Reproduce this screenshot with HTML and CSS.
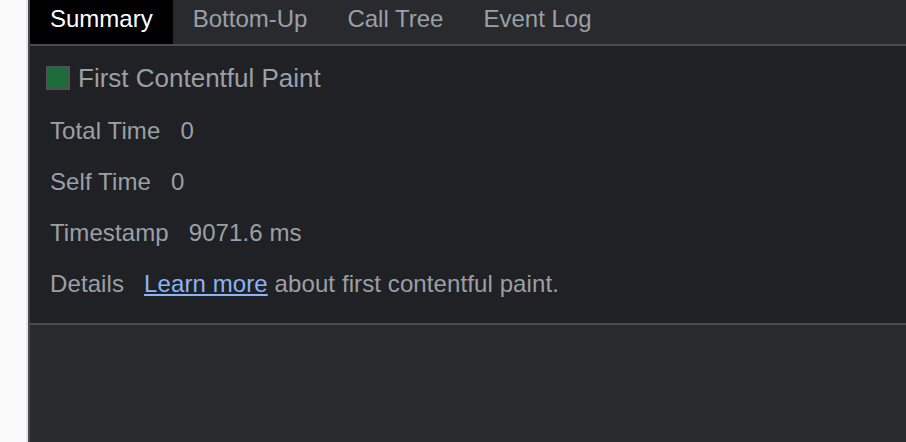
FILE: index.html
```html
<!DOCTYPE html>
<html>
<head>
<meta charset="utf-8">
<link rel="stylesheet" href="styles.css">
</head>
<body>
<div class="page">
  <div class="gutter"></div>
  <div class="panel">
    <div class="tabs">
      <div class="tab active">Summary</div>
      <div class="tab">Bottom-Up</div>
      <div class="tab">Call Tree</div>
      <div class="tab">Event Log</div>
    </div>
    <div class="summary">
      <div class="title"><span class="swatch"></span><span>First Contentful Paint</span></div>
      <div class="row"><span class="label">Total Time</span><span class="value">0</span></div>
      <div class="row"><span class="label">Self Time</span><span class="value">0</span></div>
      <div class="row"><span class="label">Timestamp</span><span class="value">9071.6 ms</span></div>
      <div class="row"><span class="label">Details</span><span class="value"><a class="link" href="#">Learn more</a> about first contentful paint.</span></div>
    </div>
    <div class="empty"></div>
  </div>
</div>
</body>
</html>
```

FILE: styles.css
```css
html, body {
  margin: 0;
  padding: 0;
  background: #fafafa;
  height: 100%;
  overflow: hidden;
}
.page {
  display: flex;
  height: 442px;
  font-family: "Liberation Sans", Arial, sans-serif;
}
.gutter {
  width: 26px;
  flex: none;
  background: #fafafa;
  border-right: 2px solid #e6e6e6;
}
.panel {
  flex: 1;
  display: flex;
  flex-direction: column;
  border-left: 2px solid #46484d;
  background: #292a2e;
  min-width: 0;
}
.tabs {
  display: flex;
  height: 44px;
  border-bottom: 2px solid #4a4c51;
  background: #292a2e;
}
.tab {
  padding: 0 20px;
  line-height: 38px;
  height: 44px;
  font-size: 24px;
  color: #9aa0a6;
  white-space: nowrap;
}
.tab.active {
  background: #000;
  color: #fff;
}
.summary {
  background: #202124;
  border-bottom: 2px solid #4a4c51;
  padding: 20px 0 14px 0;
  height: 243px;
}
.title {
  display: flex;
  align-items: center;
  height: 24px;
  padding-left: 16px;
  font-size: 26px;
  color: #9aa0a6;
  margin-bottom: 15px;
}
.swatch {
  width: 20px;
  height: 20px;
  border: 2px solid #4d5055;
  background: #1d6b38;
  margin-right: 8px;
  flex: none;
}
.row {
  height: 51px;
  line-height: 51px;
  padding-left: 20px;
  font-size: 24px;
  color: #9aa0a6;
  white-space: nowrap;
  letter-spacing: 0.1px;
}
.label {
  margin-right: 20px;
}
.link {
  color: #8ab4f8;
  text-decoration: underline;
}
.empty {
  flex: 1;
  background: #292a2e;
}
```
